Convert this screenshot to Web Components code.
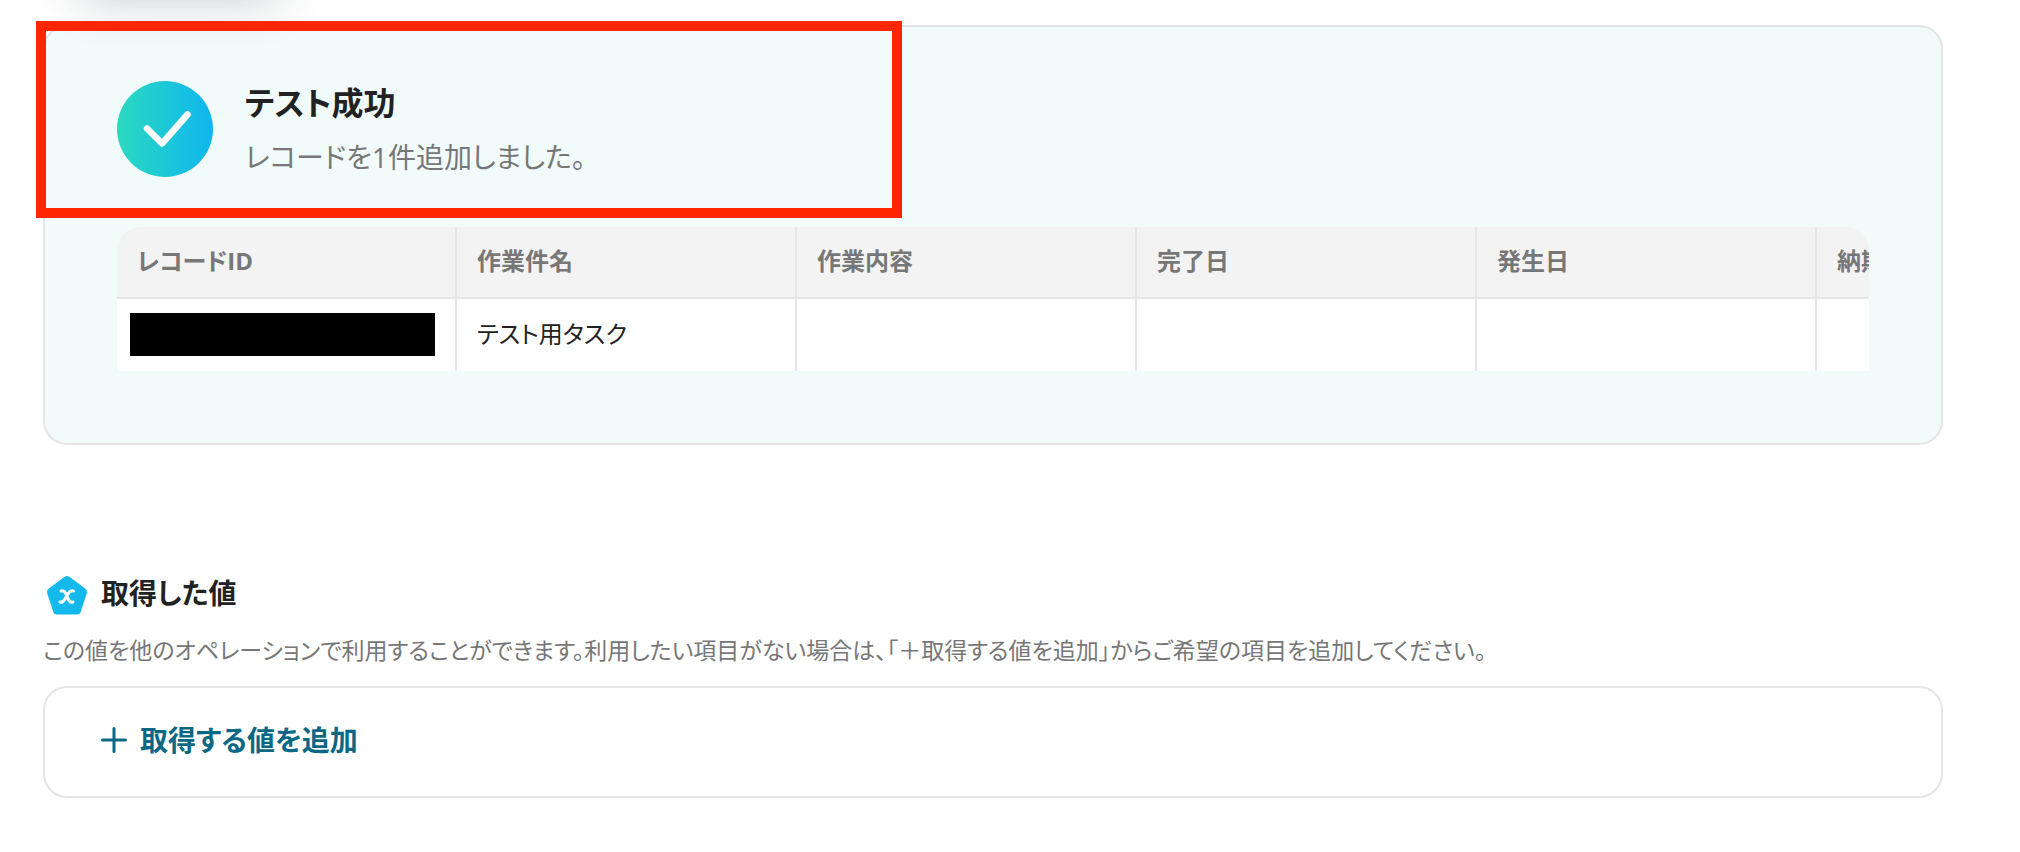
<!DOCTYPE html>
<html lang="ja">
<head>
<meta charset="utf-8">
<meta name="viewport" content="width=device-width, initial-scale=1">
<title>テスト成功</title>
<style>
  :root {
    --color-text: #222;
    --color-muted: #777;
    --color-line: #e5e5e5;
    --color-link: #0b6884;
    --color-mark: #ff2600;
    --radius: 24px;
  }

  * {
    box-sizing: border-box;
  }

  body {
    margin: 0;
    background: #fff;
    color: var(--color-text);
    font-family: "Open Sans", "Noto Sans CJK JP", sans-serif;
    font-feature-settings: "palt";
    overflow-x: hidden;
  }

  main {
    padding: 25px 77px 54px 43px;
  }
</style>
</head>
<body>
<main>
  <test-result heading="テスト成功" message="レコードを1件追加しました。">
    <record-table
      data-columns='["レコードID", "作業件名", "作業内容", "完了日", "発生日", "納期"]'
      data-rows='[[null, "テスト用タスク", "", "", "", ""]]'></record-table>
  </test-result>

  <output-values heading="取得した値">
    <span slot="description">この値を他のオペレーションで利用することができます。利用したい項目がない場合は、「＋取得する値を追加」からご希望の項目を追加してください。</span>
    <add-button>取得する値を追加</add-button>
  </output-values>
</main>

<script>
// Card with the result of the test run
class TestResult extends HTMLElement {
  constructor() {
    super();
    this.attachShadow({ mode: "open" });
  }

  connectedCallback() {
    this.render();
  }

  render() {
    this.shadowRoot.innerHTML = `
    <style>
    :host {
      display: block;
      box-sizing: border-box;
      position: relative;
      padding: 54px 72px 72px;
      border: 2px solid var(--color-line);
      border-radius: var(--radius);
      background: #f1fbfa;
    }

    .result__header {
      display: flex;
      align-items: flex-start;
      gap: 32px;
      margin-bottom: 38px;
    }

    .result__icon {
      flex: none;
      width: 96px;
      height: 96px;
    }

    .result__title {
      margin: 0;
      font-size: 32px;
      line-height: 44px;
      font-weight: 700;
    }

    .result__message {
      margin: 0;
      font-size: 28px;
      line-height: 64px;
      color: var(--color-muted);
    }

    /* Shadow of the floating button that is scrolled out above */
    .result__floating {
      position: absolute;
      left: 30px;
      top: -99px;
      width: 208px;
      height: 64px;
      border-radius: 24px;
      box-shadow: 0 8px 48px rgba(20, 50, 60, 0.24);
      pointer-events: none;
    }

    /* Frame that marks the message */
    .result__mark {
      position: absolute;
      box-sizing: border-box;
      left: -9px;
      top: -6px;
      width: 866px;
      height: 197px;
      border: 10px solid var(--color-mark);
      pointer-events: none;
    }
    </style>
    <div class="result__floating"></div>
    <header class="result__header">
      <svg class="result__icon" viewBox="0 0 96 96" aria-hidden="true">
        <defs>
          <linearGradient id="fill" x1="0" y1="0" x2="1" y2="0">
            <stop offset="0" stop-color="#2bd9bf"/>
            <stop offset="1" stop-color="#0fb6ef"/>
          </linearGradient>
        </defs>
        <circle cx="48" cy="48" r="48" fill="url(#fill)"/>
        <path d="M30 47.500L45 62.500L70.500 33.500" fill="none" stroke="#fff" stroke-width="6.500" stroke-linecap="round" stroke-linejoin="round"/>
      </svg>
      <div>
        <h2 class="result__title">${this.getAttribute("heading")}</h2>
        <p class="result__message">${this.getAttribute("message")}</p>
      </div>
    </header>
    <slot></slot>
    <div class="result__mark"></div>
    `;
  }
}

// Table of the records, scrolls sideways when it is wider than the card
class RecordTable extends HTMLElement {
  constructor() {
    super();
    this.attachShadow({ mode: "open" });
  }

  connectedCallback() {
    this.render();
  }

  render() {
    const columns = JSON.parse(this.getAttribute("data-columns"));
    const rows = JSON.parse(this.getAttribute("data-rows"));

    // A null value is a hidden one
    const cell = (value) =>
      value === null ? `<td><span class="table__hidden"></span></td>` : `<td>${value}</td>`;

    this.shadowRoot.innerHTML = `
    <style>
    :host {
      display: block;
      overflow-x: auto;
      scrollbar-width: none;
      border-radius: var(--radius) var(--radius) 0 0;
    }

    table {
      table-layout: fixed;
      width: ${columns.length * 340}px;
      border-collapse: separate;
      border-spacing: 0;
      font-size: 24px;
      line-height: 32px;
    }

    th, td {
      box-sizing: border-box;
      height: 72px;
      padding: 0 20px 2px;
      border-right: 2px solid var(--color-line);
      text-align: left;
      white-space: nowrap;
    }

    th {
      border-bottom: 2px solid var(--color-line);
      background: #f3f3f3;
      color: var(--color-muted);
      font-weight: 700;
    }

    td {
      background: #fff;
    }

    .table__hidden {
      display: block;
      height: 43px;
      margin-left: -7px;
      background: #000;
    }
    </style>
    <table>
      <thead>
        <tr>${columns.map((name) => `<th scope="col">${name}</th>`).join("")}</tr>
      </thead>
      <tbody>
        ${rows.map((row) => `<tr>${row.map(cell).join("")}</tr>`).join("")}
      </tbody>
    </table>
    `;
  }
}

// Section with the values that the operation gives
class OutputValues extends HTMLElement {
  constructor() {
    super();
    this.attachShadow({ mode: "open" });
  }

  connectedCallback() {
    this.render();
  }

  render() {
    this.shadowRoot.innerHTML = `
    <style>
    :host {
      display: block;
      margin-top: 130px;
    }

    .values__heading {
      display: flex;
      align-items: flex-start;
      gap: 10px;
      margin: 0;
      font-size: 28px;
      line-height: 36px;
      font-weight: 700;
    }

    .values__icon {
      width: 48px;
      height: 40px;
    }

    .values__description {
      margin: 19px 0 20px;
      font-size: 23px;
      line-height: 32px;
      color: var(--color-muted);
    }

    .values__box {
      display: flex;
      align-items: center;
      box-sizing: border-box;
      min-height: 112px;
      padding: 0 55px 4px;
      border: 2px solid var(--color-line);
      border-radius: var(--radius);
    }
    </style>
    <h2 class="values__heading">
      <svg class="values__icon" viewBox="0 0 48 40" aria-hidden="true">
        <path d="M24 5L40 17L34 35.500H14L8 17Z" fill="#14b9ec" stroke="#14b9ec" stroke-width="8" stroke-linejoin="round"/>
        <path d="M18 16C21.500 15 22.500 18 24 21.500C25.500 25 26.500 28 30 27M30.500 16C27 15 25.500 18 23.500 21.500C21.500 25 20 28 17 27" fill="none" stroke="#fff" stroke-width="3" stroke-linecap="round"/>
      </svg>
      <span>${this.getAttribute("heading")}</span>
    </h2>
    <p class="values__description"><slot name="description"></slot></p>
    <div class="values__box"><slot></slot></div>
    `;
  }
}

// Text button with a plus sign
class AddButton extends HTMLElement {
  constructor() {
    super();
    this.attachShadow({ mode: "open" });
  }

  connectedCallback() {
    this.render();
  }

  render() {
    this.shadowRoot.innerHTML = `
    <style>
    :host {
      display: inline-block;
    }

    button {
      display: flex;
      align-items: center;
      gap: 12px;
      margin: 0;
      padding: 0;
      border: 0;
      background: none;
      color: var(--color-link);
      font: inherit;
      font-feature-settings: inherit;
      font-size: 28px;
      line-height: 40px;
      font-weight: 700;
      cursor: pointer;
    }

    svg {
      width: 28px;
      height: 28px;
    }
    </style>
    <button type="button">
      <svg viewBox="0 0 28 28" aria-hidden="true">
        <path d="M14 2.500V25.500M2.500 14H25.500" fill="none" stroke="currentColor" stroke-width="3" stroke-linecap="round"/>
      </svg>
      <slot></slot>
    </button>
    `;
  }
}

customElements.define("test-result", TestResult);
customElements.define("record-table", RecordTable);
customElements.define("output-values", OutputValues);
customElements.define("add-button", AddButton);
</script>
</body>
</html>
